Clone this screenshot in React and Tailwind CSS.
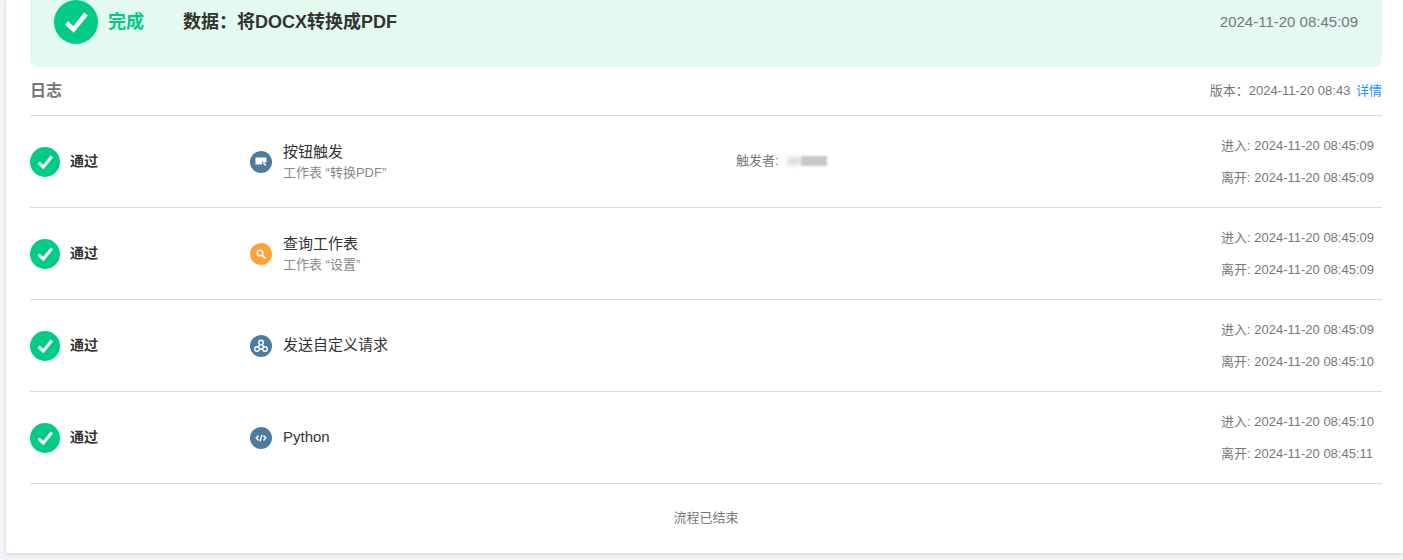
import React from "react";

const CheckIcon = ({ size }) => (
  <svg width={size} height={size} viewBox="0 0 44 44" className="shrink-0">
    <circle cx="22" cy="22" r="22" fill="#00cc85" />
    <path d="M12.500 23l7 6.500L32 14" fill="none" stroke="#fff" strokeWidth="4.500" />
  </svg>
);

const ButtonIcon = () => (
  <svg width="14" height="14" viewBox="0 0 14 14">
    <path d="M1.500 2.500h11v5H10L8 6v3.500H1.500z" fill="#fff" />
    <path d="M9 7.500l3 3" stroke="#fff" strokeWidth="1.200" />
  </svg>
);

const SearchIcon = () => (
  <svg width="12" height="12" viewBox="0 0 12 12" fill="none" stroke="#fff">
    <circle cx="5" cy="5" r="2.800" strokeWidth="1.500" />
    <path d="M7 7l3.500 3.500" strokeWidth="2" />
  </svg>
);

const WebhookIcon = () => (
  <svg width="16" height="16" viewBox="0 0 16 16" fill="none" stroke="#fff" strokeWidth="1.400">
    <circle cx="8" cy="4.500" r="2.300" />
    <circle cx="4" cy="11" r="2.300" />
    <circle cx="12" cy="11" r="2.300" />
    <path d="M6.500 11h3M6.800 6.500L5.200 9M9.200 6.500L10.800 9" />
  </svg>
);

const CodeIcon = () => (
  <svg width="12" height="12" viewBox="0 0 12 12" fill="none" stroke="#fff" strokeWidth="1.400">
    <path d="M3.500 3.500L1.200 6l2.300 2.500M8.500 3.500L10.800 6 8.500 8.500M7 2.800L5 9.200" />
  </svg>
);

const rows = [
  {
    icon: <ButtonIcon />,
    color: "bg-[#4c7ba0]",
    title: "按钮触发",
    sub: "工作表 “转换PDF”",
    trigger: true,
    enter: "2024-11-20 08:45:09",
    leave: "2024-11-20 08:45:09",
  },
  {
    icon: <SearchIcon />,
    color: "bg-[#ffa03a]",
    title: "查询工作表",
    sub: "工作表 “设置”",
    enter: "2024-11-20 08:45:09",
    leave: "2024-11-20 08:45:09",
  },
  {
    icon: <WebhookIcon />,
    color: "bg-[#4c7ba0]",
    title: "发送自定义请求",
    enter: "2024-11-20 08:45:09",
    leave: "2024-11-20 08:45:10",
  },
  {
    icon: <CodeIcon />,
    color: "bg-[#4c7ba0]",
    title: "Python",
    enter: "2024-11-20 08:45:10",
    leave: "2024-11-20 08:45:11",
  },
];

const LogRow = ({ row }) => (
  <div className="flex h-[92px] items-center border-b border-[#ddd]">
    <div className="flex w-[220px] items-center gap-[10px]">
      <CheckIcon size={30} />
      <span className="-mt-px text-sm leading-[20px] font-bold text-[#333]">通过</span>
    </div>
    <div className="flex w-[486px] items-center gap-[11px]">
      <div className={`flex h-[22px] w-[22px] items-center justify-center rounded-full ${row.color}`}>
        {row.icon}
      </div>
      <div className={row.sub ? "mt-[2px]" : "-mt-[2px]"}>
        <div className="text-[15px] leading-[20px] text-[#333]">{row.title}</div>
        {row.sub && <div className="mt-px text-[13px] leading-[20px] text-[#888]">{row.sub}</div>}
      </div>
    </div>
    <div className="-mt-px flex flex-1 items-center text-[13px] text-[#777]">
      {row.trigger && (
        <>
          <span>触发者:</span>
          <span className="ml-[8px] h-[8px] w-[14px] bg-[#ddd] blur-[2px]" />
          <span className="h-[10px] w-[26px] bg-[#c8c8c8] blur-[1px]" />
        </>
      )}
    </div>
    <div className="w-[161px] text-[13px] leading-[32px] text-[#777]">
      <div>进入: {row.enter}</div>
      <div>离开: {row.leave}</div>
    </div>
  </div>
);

export default function App() {
  return (
    <div
      className="h-[560px] overflow-hidden bg-[#f3f3f9] pl-[6px] text-[#333]"
      style={{ fontFamily: '"Liberation Sans", "Noto Sans CJK SC", sans-serif' }}
    >
      <div className="h-[553px] bg-white pl-6 pr-[21px] shadow-[0_1px_4px_rgba(0,0,0,0.15)]">
        <div className="flex h-[67px] items-start rounded-b-lg bg-[#e4f9f0] pl-6 pr-6">
          <CheckIcon size={44} />
          <span className="ml-[10px] w-[75px] text-lg leading-[44px] font-bold text-[#00cc85]">完成</span>
          <span className="flex-1 text-lg leading-[44px] font-bold text-[#333]">数据：将DOCX转换成PDF</span>
          <span className="text-[15px] leading-[44px] text-[#777]">2024-11-20 08:45:09</span>
        </div>
        <div className="flex h-[49px] items-center justify-between border-b border-[#ddd]">
          <span className="text-base font-bold text-[#777]">日志</span>
          <span className="-mt-px text-[13px] text-[#777]">
            版本：2024-11-20 08:43 <a className="ml-[2px] text-[13px] text-[#1e90ff]">详情</a>
          </span>
        </div>
        {rows.map((row) => (
          <LogRow key={row.title} row={row} />
        ))}
        <div className="pt-[25px] text-center text-[13px] leading-[18px] text-[#777]">流程已结束</div>
      </div>
    </div>
  );
}
